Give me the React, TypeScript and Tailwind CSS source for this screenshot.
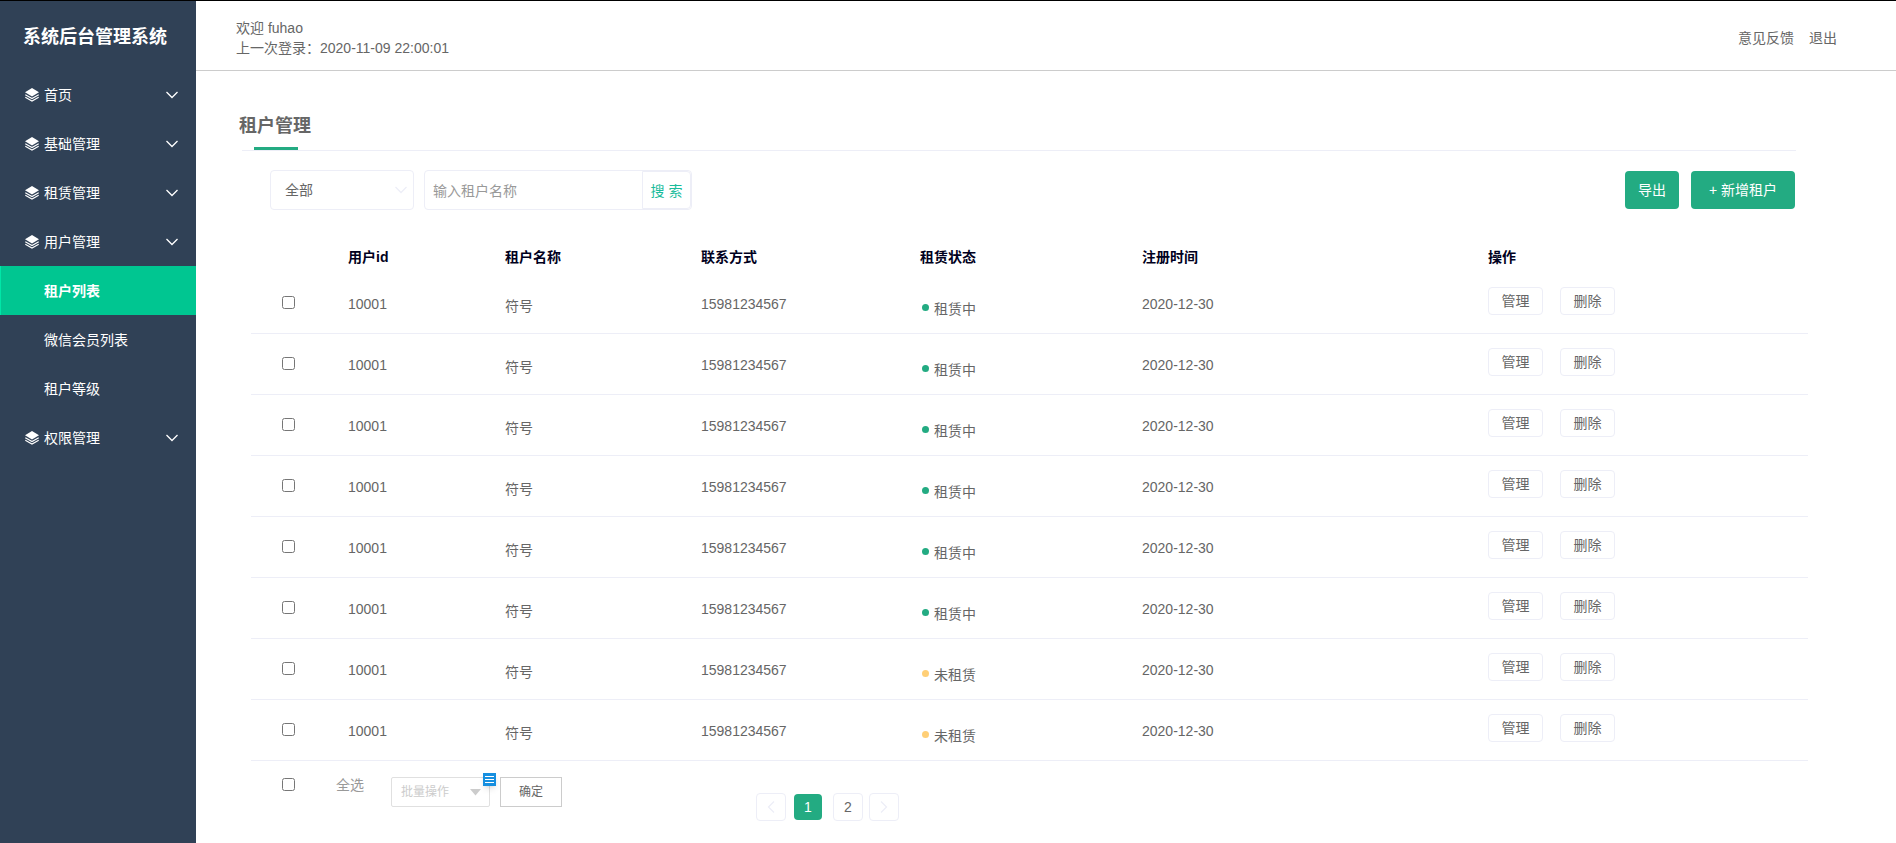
// src/App.tsx
import { useState } from 'react';

const MENU = [
  { title: '首页' },
  { title: '基础管理' },
  { title: '租赁管理' },
  { title: '用户管理', children: ['租户列表', '微信会员列表', '租户等级'] },
  { title: '权限管理' },
];

const tenants = Array.from({ length: 8 }, (_, i) => ({
  key: i,
  id: '10001',
  name: '符号',
  phone: '15981234567',
  rented: i < 6,
  date: '2020-12-30',
}));

function LayersIcon() {
  return (
    <svg viewBox="0 0 14 14" className="w-[14px] h-[14px]" fill="none" stroke="currentColor" aria-hidden="true">
      <path d="M7 0 14 4.3 7 8.6 0 4.3Z" fill="currentColor" stroke="none" />
      <path d="M.3 6.7 7 10.6 13.7 6.7" strokeWidth="1.1" />
      <path d="M.3 9.2 7 13.1 13.7 9.2" strokeWidth="1.1" />
    </svg>
  );
}

function Chevron({ className }: { className: string }) {
  return (
    <svg viewBox="0 0 12 8" className={className} fill="none" stroke="currentColor" strokeWidth="1.3" aria-hidden="true">
      <path d="M.5 1 6 6.5 11.5 1" />
    </svg>
  );
}

function Sidebar() {
  const [active, setActive] = useState('租户列表');

  return (
    <aside className="w-[196px] shrink-0 bg-[#304156] text-white">
      <h1 className="h-[69px] pt-[22px] pl-[23px] text-lg leading-7 font-bold whitespace-nowrap">系统后台管理系统</h1>
      <nav>
        {MENU.map(item => (
          <div key={item.title}>
            <button className="w-full h-[49px] pl-[25px] pr-[18px] flex items-center">
              <LayersIcon />
              <span className="ml-[5px] flex-1 text-left">{item.title}</span>
              <Chevron className="w-3 h-2" />
            </button>
            {item.children?.map(child => (
              <a
                key={child}
                href="#"
                onClick={() => setActive(child)}
                className={
                  child === active
                    ? 'h-[49px] pl-[43px] flex items-center font-bold bg-[#00c691] border-l border-[#00e6a8]'
                    : 'h-[49px] pl-[44px] flex items-center'
                }
              >
                {child}
              </a>
            ))}
          </div>
        ))}
      </nav>
    </aside>
  );
}

function Header() {
  return (
    <header className="h-[70px] pt-1 pl-10 pr-[59px] flex items-center justify-between border-b border-[#ccc]">
      <div className="leading-5">
        <p>欢迎 fuhao</p>
        <p>上一次登录：2020-11-09 22:00:01</p>
      </div>
      <div className="flex gap-[15px]">
        <a href="#">意见反馈</a>
        <a href="#">退出</a>
      </div>
    </header>
  );
}

function Toolbar() {
  return (
    <div className="mt-[19px] ml-[28px] h-10 flex items-center">
      <div className="relative">
        <select aria-label="状态" className="block w-36 h-10 pl-[14px] appearance-none border border-[#edeef7] rounded">
          <option>全部</option>
        </select>
        <Chevron className="absolute right-[7px] top-4 w-3 h-2 text-[#edeef7] pointer-events-none" />
      </div>
      <div className="ml-[10px] w-[268px] h-10 flex border border-[#edeef7] rounded">
        <input
          type="text"
          aria-label="租户名称"
          placeholder="输入租户名称"
          className="flex-1 min-w-0 pt-0.5 pl-2 placeholder:text-[#999] outline-none"
        />
        <button className="w-[49px] pt-0.5 border border-[#edeef7] rounded-r text-[#1abc9c]">搜 索</button>
      </div>
      <button className="ml-auto w-[54px] h-[38px] rounded bg-[#23ab82] text-white">导出</button>
      <button className="ml-3 mr-px w-[104px] h-[38px] rounded bg-[#23ab82] text-white">+ 新增租户</button>
    </div>
  );
}

function TenantTable() {
  return (
    <table className="mt-[31px] ml-[9px] w-[calc(100%+3px)] table-fixed border-separate border-spacing-0 text-left">
      <thead>
        <tr className="h-8 align-top leading-8 text-[#000020]">
          <th className="w-[97px]"></th>
          <th className="w-[157px]">用户id</th>
          <th className="w-[196px]">租户名称</th>
          <th className="w-[219px]">联系方式</th>
          <th className="w-[222px]">租赁状态</th>
          <th className="w-[346px]">注册时间</th>
          <th>操作</th>
        </tr>
      </thead>
      <tbody>
        {tenants.map(t => (
          <tr key={t.key} className="h-[61px] align-top leading-5 [&>td]:border-b [&>td]:border-[#edeef7]">
            <td className="pt-[23px] pl-[31px]">
              <input type="checkbox" aria-label="选择租户" className="block w-[13px] h-[13px]" />
            </td>
            <td className="pt-[21px]">{t.id}</td>
            <td className="pt-[23px]">{t.name}</td>
            <td className="pt-[21px]">{t.phone}</td>
            <td className="pt-[26px]">
              <span className="pl-[2px] flex gap-[5px]">
                <i className={t.rented ? 'mt-[5px] w-[7px] h-[7px] rounded-full bg-[#23ab82]' : 'mt-[5px] w-[7px] h-[7px] rounded-full bg-[#ffcf76]'} />
                {t.rented ? '租赁中' : '未租赁'}
              </span>
            </td>
            <td className="pt-[21px]">{t.date}</td>
            <td className="pt-[14px]">
              <div className="flex gap-[17px]">
                <button className="w-[55px] h-7 border border-[#edeef7] rounded">管理</button>
                <button className="w-[55px] h-7 border border-[#edeef7] rounded">删除</button>
              </div>
            </td>
          </tr>
        ))}
      </tbody>
    </table>
  );
}

function TableFooter() {
  return (
    <div className="ml-10 pt-3 flex items-start">
      <input id="all" type="checkbox" className="mt-[5px] w-[13px] h-[13px]" />
      <label htmlFor="all" className="mt-[2px] ml-[41px] leading-5 text-[#999]">全选</label>
      <div className="relative mt-1 ml-[27px]">
        <select aria-label="批量操作" className="block w-[99px] h-[30px] pl-[9px] appearance-none text-xs text-[#ccc] border border-[#e0e0e0] rounded-xs">
          <option>批量操作</option>
        </select>
        <svg viewBox="0 0 11 7" className="absolute right-[9px] top-3 w-[11px] h-[7px] pointer-events-none" aria-hidden="true">
          <path d="M0 0H11L5.5 6.5Z" fill="#ccc" />
        </svg>
        {/* 右上角蓝色标记 */}
        <svg viewBox="0 0 13 13" className="absolute -right-[6px] -top-1 w-[13px] h-[13px] shadow-md" aria-hidden="true">
          <path d="M0 0H13V13H0Z" fill="#168fe0" />
          <path d="M2 3.5H11M2 6.5H11M2 9.5H11" stroke="#fff" />
        </svg>
      </div>
      <button className="mt-1 ml-[10px] w-[62px] h-[30px] text-xs border border-[#ccc]">确定</button>

      <div className="mt-5 ml-[194px] flex items-center">
        <button aria-label="上一页" className="w-[30px] h-7 flex items-center justify-center border border-[#edeef7] rounded">
          <Chevron className="w-3 h-2 rotate-90 text-[#edeef7]" />
        </button>
        <button className="ml-2 w-7 h-[26px] rounded bg-[#23ab82] text-white">1</button>
        <button className="ml-[11px] w-[30px] h-7 border border-[#edeef7] rounded">2</button>
        <button aria-label="下一页" className="ml-[6px] w-[30px] h-7 flex items-center justify-center border border-[#edeef7] rounded">
          <Chevron className="w-3 h-2 -rotate-90 text-[#edeef7]" />
        </button>
      </div>
    </div>
  );
}

export default function App() {
  return (
    <div className="min-h-screen flex border-t border-black bg-white text-sm text-[#666] font-['Liberation_Sans','Noto_Sans_CJK_SC',sans-serif]">
      <Sidebar />
      <div className="flex-1 min-w-0">
        <Header />
        <main className="pt-10 pl-[46px] pr-[100px]">
          <div className="h-10 border-b border-[#edeef7] flex flex-col justify-between items-start">
            <h2 className="-ml-[3px] text-lg leading-[30px] font-bold">租户管理</h2>
            <div className="ml-3 w-11 h-[3px] bg-[#23ab82]" />
          </div>
          <Toolbar />
          <TenantTable />
          <TableFooter />
        </main>
      </div>
    </div>
  );
}
